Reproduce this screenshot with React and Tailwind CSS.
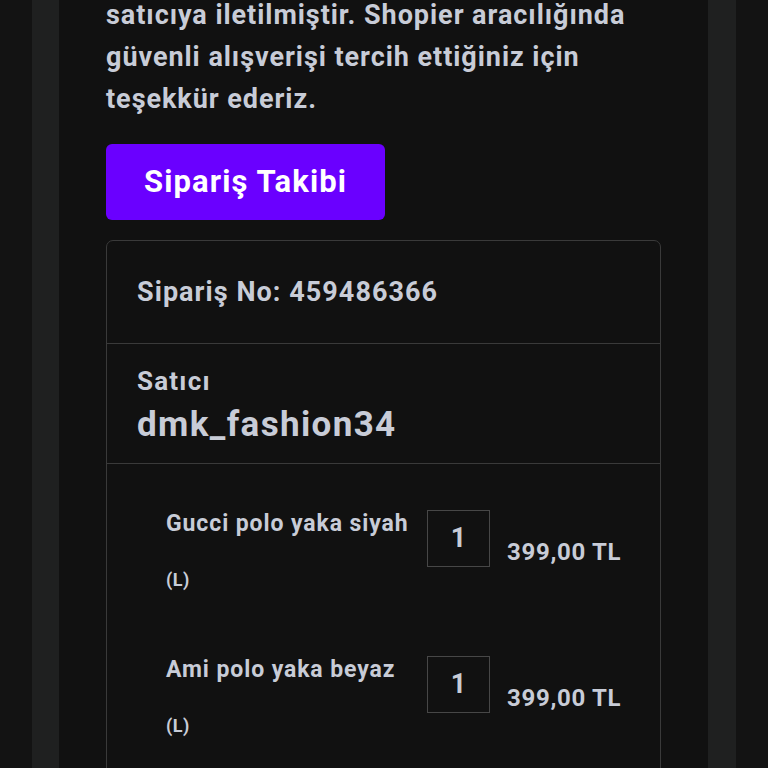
import React from 'react';

const items = [
  { name: 'Gucci polo yaka siyah', variant: '(L)', qty: 1, price: '399,00 TL' },
  { name: 'Ami polo yaka beyaz', variant: '(L)', qty: 1, price: '399,00 TL' },
];

export default function App() {
  return (
    <div
      className="w-[768px] h-[768px] overflow-hidden bg-[#131313] flex px-[32px] text-[#c8ccd7]"
      style={{ fontFamily: 'Roboto, "Liberation Sans", sans-serif' }}
    >
      <div className="w-[28px] bg-[#1f2020]"></div>
      <div className="flex-1 bg-[#111111] px-[47px]">
        {/* Thank-you message */}
        <p className="-mt-[6px] text-[27px] leading-[42px] font-bold tracking-[0.95px]">
          satıcıya iletilmiştir. Shopier aracılığında
          <br />
          güvenli alışverişi tercih ettiğiniz için
          <br />
          teşekkür ederiz.
        </p>

        <button className="mt-[24px] h-[76px] px-[38px] rounded-[6px] bg-[#6a00ff] text-white text-[31px] font-bold tracking-[1.1px]">
          Sipariş Takibi
        </button>

        {/* Order card */}
        <div className="mt-[20px] w-[555px] border border-[#3a3a3a] rounded-[7px]">
          <div className="h-[103px] px-[30px] flex items-center border-b border-[#3a3a3a]">
            <span className="text-[27px] font-bold tracking-[1.05px]">Sipariş No: 459486366</span>
          </div>

          <div className="h-[120px] px-[30px] pt-[22px] flex flex-col border-b border-[#3a3a3a]">
            <span className="text-[26px] font-bold leading-[30px] tracking-[1.2px]">Satıcı</span>
            <span className="mt-[7px] text-[35px] font-bold leading-[44px] tracking-[1.35px]">dmk_fashion34</span>
          </div>

          <div className="pt-[46px] pb-[80px] pl-[59px] flex flex-col gap-[56px]">
            {items.map((it) => (
              <div key={it.name} className="flex items-start h-[90px]">
                <div className="w-[261px] flex flex-col">
                  <span className="text-[23px] font-bold leading-[28px] tracking-[0.9px]">{it.name}</span>
                  <span className="mt-[30px] text-[18px] font-bold leading-[24px] tracking-[0.5px]">{it.variant}</span>
                </div>
                <div className="w-[63px] h-[57px] border border-[#474747] flex items-center justify-center text-[27px] font-bold">
                  {it.qty}
                </div>
                <span className="ml-[17px] mt-[28px] text-[24px] font-bold leading-[28px] tracking-[0.7px]">{it.price}</span>
              </div>
            ))}
          </div>
        </div>
      </div>
      <div className="w-[29px] bg-[#1f2020]"></div>
    </div>
  );
}
